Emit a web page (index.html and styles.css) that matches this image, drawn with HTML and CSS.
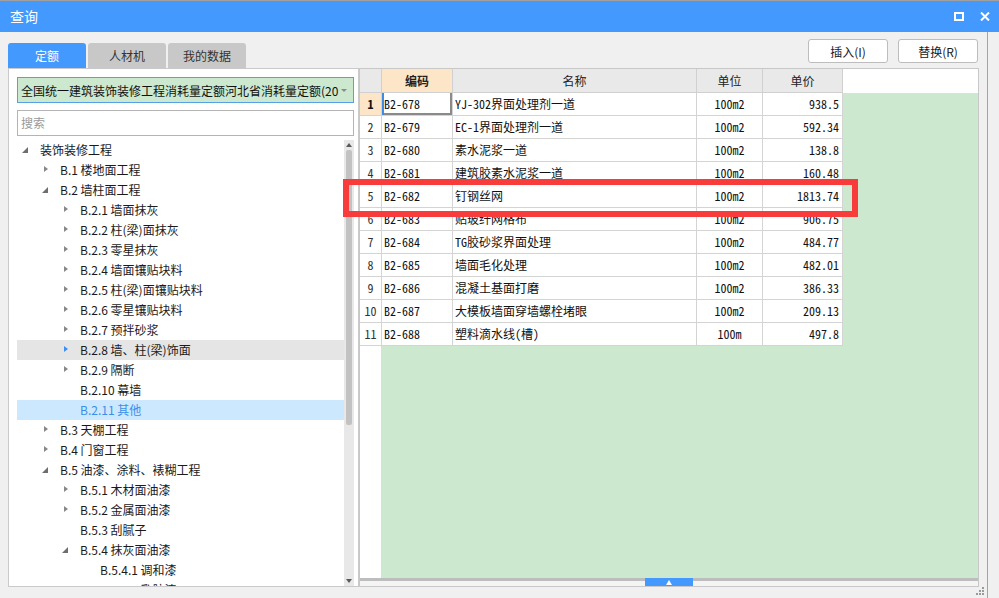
FILE: index.html
```html
<!DOCTYPE html>
<html lang="zh-CN">
<head>
<meta charset="utf-8">
<title>查询</title>
<link rel="stylesheet" href="styles.css">
</head>
<body>
<div class="titlebar">
  <span class="title">查询</span>
  <div class="winbtns">
    <svg class="ic-max" width="10" height="9" viewBox="0 0 10 9"><rect x="1" y="1" width="8" height="7" fill="none" stroke="#fff" stroke-width="2"/></svg>
    <svg class="ic-close" width="10" height="9" viewBox="0 0 10 9"><path d="M1 0.5 L9 8.5 M9 0.5 L1 8.5" stroke="#fff" stroke-width="2"/></svg>
  </div>
</div>
<div class="window">
  <div class="toolbar">
    <div class="tabs">
      <div class="tab active">定额</div>
      <div class="tab">人材机</div>
      <div class="tab">我的数据</div>
    </div>
    <div class="actions">
      <button class="btn">插入(I)</button>
      <button class="btn">替换(R)</button>
    </div>
  </div>
  <div class="main">
    <div class="left-panel">
      <div class="select"><span class="select-text">全国统一建筑装饰装修工程消耗量定额河北省消耗量定额(2013)</span><span class="caret"></span></div>
      <div class="search">搜索</div>
      <div class="tree-wrap">
        <ul class="tree">
          <li class="node l0"><i class="tw open"></i><span>装饰装修工程</span></li>
          <li class="node l1"><i class="tw shut"></i><span>B.1 楼地面工程</span></li>
          <li class="node l1"><i class="tw open"></i><span>B.2 墙柱面工程</span></li>
          <li class="node l2"><i class="tw shut"></i><span>B.2.1 墙面抹灰</span></li>
          <li class="node l2"><i class="tw shut"></i><span>B.2.2 柱(梁)面抹灰</span></li>
          <li class="node l2"><i class="tw shut"></i><span>B.2.3 零星抹灰</span></li>
          <li class="node l2"><i class="tw shut"></i><span>B.2.4 墙面镶贴块料</span></li>
          <li class="node l2"><i class="tw shut"></i><span>B.2.5 柱(梁)面镶贴块料</span></li>
          <li class="node l2"><i class="tw shut"></i><span>B.2.6 零星镶贴块料</span></li>
          <li class="node l2"><i class="tw shut"></i><span>B.2.7 预拌砂浆</span></li>
          <li class="node l2 hover"><i class="tw shut"></i><span>B.2.8 墙、柱(梁)饰面</span></li>
          <li class="node l2"><i class="tw shut"></i><span>B.2.9 隔断</span></li>
          <li class="node l2"><i class="tw"></i><span>B.2.10 幕墙</span></li>
          <li class="node l2 selected"><i class="tw"></i><span>B.2.11 其他</span></li>
          <li class="node l1"><i class="tw shut"></i><span>B.3 天棚工程</span></li>
          <li class="node l1"><i class="tw shut"></i><span>B.4 门窗工程</span></li>
          <li class="node l1"><i class="tw open"></i><span>B.5 油漆、涂料、裱糊工程</span></li>
          <li class="node l2"><i class="tw shut"></i><span>B.5.1 木材面油漆</span></li>
          <li class="node l2"><i class="tw shut"></i><span>B.5.2 金属面油漆</span></li>
          <li class="node l2"><i class="tw"></i><span>B.5.3 刮腻子</span></li>
          <li class="node l2"><i class="tw open"></i><span>B.5.4 抹灰面油漆</span></li>
          <li class="node l3"><i class="tw"></i><span>B.5.4.1 调和漆</span></li>
          <li class="node l3"><i class="tw"></i><span>B.5.4.2 乳胶漆</span></li>
        </ul>
        <div class="vscroll">
          <span class="arr-up"></span>
          <span class="thumb"></span>
          <span class="arr-down"></span>
        </div>
      </div>
    </div>
    <div class="grid">
      <div class="grid-head">
        <div class="c num"></div>
        <div class="c code cur">编码</div>
        <div class="c name">名称</div>
        <div class="c unit">单位</div>
        <div class="c price">单价</div>
        <div class="head-fill"></div>
      </div>
      <div class="grid-body">
        <div class="r"><div class="c num cur">1</div><div class="c code focus">B2-678</div><div class="c name">YJ-302界面处理剂一道</div><div class="c unit">100m2</div><div class="c price">938.5</div></div>
        <div class="r"><div class="c num">2</div><div class="c code">B2-679</div><div class="c name">EC-1界面处理剂一道</div><div class="c unit">100m2</div><div class="c price">592.34</div></div>
        <div class="r"><div class="c num">3</div><div class="c code">B2-680</div><div class="c name">素水泥浆一道</div><div class="c unit">100m2</div><div class="c price">138.8</div></div>
        <div class="r"><div class="c num">4</div><div class="c code">B2-681</div><div class="c name">建筑胶素水泥浆一道</div><div class="c unit">100m2</div><div class="c price">160.48</div></div>
        <div class="r"><div class="c num">5</div><div class="c code">B2-682</div><div class="c name">钉钢丝网</div><div class="c unit">100m2</div><div class="c price">1813.74</div></div>
        <div class="r"><div class="c num">6</div><div class="c code">B2-683</div><div class="c name">贴玻纤网格布</div><div class="c unit">100m2</div><div class="c price">906.75</div></div>
        <div class="r"><div class="c num">7</div><div class="c code">B2-684</div><div class="c name">TG胶砂浆界面处理</div><div class="c unit">100m2</div><div class="c price">484.77</div></div>
        <div class="r"><div class="c num">8</div><div class="c code">B2-685</div><div class="c name">墙面毛化处理</div><div class="c unit">100m2</div><div class="c price">482.01</div></div>
        <div class="r"><div class="c num">9</div><div class="c code">B2-686</div><div class="c name">混凝土基面打磨</div><div class="c unit">100m2</div><div class="c price">386.33</div></div>
        <div class="r"><div class="c num">10</div><div class="c code">B2-687</div><div class="c name">大模板墙面穿墙螺栓堵眼</div><div class="c unit">100m2</div><div class="c price">209.13</div></div>
        <div class="r"><div class="c num">11</div><div class="c code">B2-688</div><div class="c name">塑料滴水线(槽)</div><div class="c unit">100m</div><div class="c price">497.8</div></div>
      </div>
      <div class="hbar"><span class="htab"><i></i></span></div>
    </div>
  </div>
</div>
<div class="annot"></div>
<svg class="grip" width="9" height="9" viewBox="0 0 9 9">
  <rect x="6" y="0" width="2" height="2" fill="#9a9a9a"/>
  <rect x="3" y="3" width="2" height="2" fill="#9a9a9a"/><rect x="6" y="3" width="2" height="2" fill="#9a9a9a"/>
  <rect x="0" y="6" width="2" height="2" fill="#9a9a9a"/><rect x="3" y="6" width="2" height="2" fill="#9a9a9a"/><rect x="6" y="6" width="2" height="2" fill="#9a9a9a"/>
</svg>
</body>
</html>
```

FILE: styles.css
```css
* { box-sizing: border-box; }
html, body { margin: 0; padding: 0; }
body {
  width: 999px;
  height: 598px;
  overflow: hidden;
  position: relative;
  background: #f0f0f0;
  font-family: "Noto Sans CJK SC", "Liberation Sans", sans-serif;
  font-size: 12px;
  color: #1a1a1a;
}

/* title bar */
.titlebar {
  height: 32px;
  border-top: 1px solid #a0a0a0;
  background: #4399fe;
  display: flex;
  align-items: center;
  padding: 0 9px 0 10px;
  color: #fff;
}
.title { font-size: 14px; line-height: 1; padding-bottom: 1px; }
.winbtns { margin-left: auto; display: flex; gap: 16px; align-items: center; }

/* window body */
.window {
  width: 988px;
  height: 566px;
  border-right: 1px solid #a3a3a3;
}
.toolbar {
  display: flex;
  height: 36px;
  width: 979px;
  padding-left: 8px;
}
.tabs { display: flex; gap: 2px; align-self: flex-end; }
.tab {
  width: 78px;
  height: 25px;
  line-height: 25px;
  text-align: center;
  background: #c8c8c8;
  color: #333;
  border-radius: 3px 3px 0 0;
  font-size: 12px;
}
.tab.active { background: #4399fe; color: #fff; }
.actions { margin-left: auto; margin-top: 7px; margin-right: 1px; display: flex; gap: 10px; align-self: flex-start; }
.btn {
  width: 80px;
  height: 24px;
  background: #fff;
  border: 1px solid #bdbdbd;
  border-radius: 3px;
  font-family: inherit;
  font-size: 12px;
  color: #1a1a1a;
  padding: 0;
}

.main {
  display: flex;
  height: 519px;
  padding-left: 8px;
}

/* left panel */
.left-panel {
  width: 351px;
  background: #fff;
  border: 1px solid #cacaca;
  padding: 8px 4px 0 8px;
  display: flex;
  flex-direction: column;
}
.select {
  height: 26px;
  border: 1px solid #56a0ea;
  background: #cce8cf;
  display: flex;
  align-items: center;
  padding-left: 3px;
  overflow: hidden;
  position: relative;
}
.select-text { white-space: nowrap; overflow: hidden; width: 318px; font-size: 12px; color: #111; }
.caret {
  margin-left: auto;
  margin-right: 6px;
  width: 0; height: 0;
  border-left: 3px solid transparent;
  border-right: 3px solid transparent;
  border-top: 3px solid #8a8a8a;
}
.search {
  height: 26px;
  margin-top: 7px;
  border: 1px solid #b4b4b4;
  color: #9a9a9a;
  line-height: 24px;
  padding-left: 3px;
}
.tree-wrap {
  margin-top: 4px;
  flex: 1;
  display: flex;
  min-height: 0;
}
.tree {
  list-style: none;
  margin: 0;
  padding: 0;
  flex: 1;
  overflow: hidden;
}
.node {
  height: 20px;
  line-height: 20px;
  display: flex;
  align-items: center;
  white-space: nowrap;
}
.node span { margin-left: 5px; }
.l1 { padding-left: 20px; }
.l2 { padding-left: 40px; }
.l3 { padding-left: 60px; }
.tw { width: 18px; height: 20px; flex: none; position: relative; }
.tw.shut::after {
  content: "";
  position: absolute;
  left: 7px; top: 6px;
  border-left: 4px solid #888;
  border-top: 3.5px solid transparent;
  border-bottom: 3.5px solid transparent;
}
.tw.open::after {
  content: "";
  position: absolute;
  left: 5px; top: 7px;
  border-bottom: 6px solid #6e6e6e;
  border-left: 6px solid transparent;
}
.node.hover { background: #e5e5e5; }
.node.hover .tw.shut::after { border-left-color: #3d8ff0; }
.node.selected { background: #cce8ff; color: #3a8ee8; }

.vscroll {
  width: 10px;
  background: #e8e8e8;
  display: flex;
  flex-direction: column;
  align-items: center;
}
.arr-up {
  margin-top: 3px;
  width: 0; height: 0;
  border-left: 3.5px solid transparent;
  border-right: 3.5px solid transparent;
  border-bottom: 4px solid #5a5a5a;
}
.thumb {
  margin-top: 3px;
  width: 6px;
  height: 275px;
  background: #c2c2c2;
  border-radius: 2px;
}
.arr-down {
  margin-top: auto;
  margin-bottom: 3px;
  width: 0; height: 0;
  border-left: 3.5px solid transparent;
  border-right: 3.5px solid transparent;
  border-top: 4px solid #5a5a5a;
}

/* grid */
.grid {
  width: 620px;
  border: 1px solid #c8c8c8;
  display: flex;
  flex-direction: column;
  background: #fff;
}
.grid-head { display: flex; height: 24px; flex: none; }
.grid-head .c {
  background: #e9e9e9;
  border-right: 1px solid #d0d0d0;
  border-bottom: 1px solid #d0d0d0;
  text-align: center;
  line-height: 23px;
  font-size: 12px;
  color: #222;
}
.grid-head .c.cur { background: #fde6c7; font-weight: bold; }
.head-fill { flex: 1; background: #fff; }
.c { flex: none; height: 100%; overflow: hidden; white-space: nowrap; }
.num { width: 22px; }
.code { width: 71px; }
.name { width: 244px; }
.unit { width: 66px; }
.price { width: 80px; }

.grid-body {
  flex: 1;
  background: linear-gradient(to right, #fff 21px, #dcdcdc 21px, #dcdcdc 22px, #cce8cf 22px);
}
.r { display: flex; height: 23px; width: 483px; }
.r .c {
  background: #fff;
  border-right: 1px solid #d4d4d4;
  border-bottom: 1px solid #d4d4d4;
  font-family: "Noto Sans Mono CJK SC", "Noto Sans CJK SC", monospace;
  font-size: 12px;
  line-height: 22px;
  color: #111;
}
.r .num { text-align: center; color: #333; }
.r .num.cur { background: #fde6c7; font-weight: bold; color: #111; }
.r .code, .r .name { padding-left: 2px; }
.r .unit { text-align: center; }
.r .price { text-align: right; padding-right: 3px; }
.r .code.focus { box-shadow: inset 2px 0 0 #3c8de8, inset -2px -2px 0 #8a8a8a; }

.hbar {
  height: 8px;
  flex: none;
  background: linear-gradient(#bdbdbd 0 3px, #f4f4f4 3px);
  display: flex;
  justify-content: center;
}
.htab {
  width: 48px;
  height: 8px;
  background: #4399fe;
  position: relative;
}
.htab i {
  position: absolute;
  left: 21px; top: 2px;
  border-left: 3px solid transparent;
  border-right: 3px solid transparent;
  border-bottom: 5px solid #fff;
}

/* overlays */
.annot {
  position: absolute;
  left: 343px;
  top: 179px;
  width: 515px;
  height: 38px;
  border: 6px solid #f83b3b;
}
.grip { position: absolute; left: 976px; top: 587px; }
```
